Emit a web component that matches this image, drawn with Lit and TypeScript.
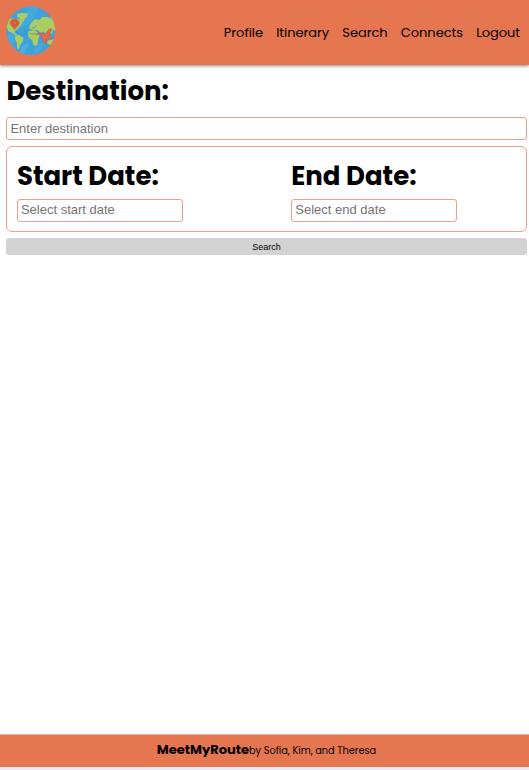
import { LitElement, html, css, svg } from "lit";
import { customElement } from "lit/decorators.js";

@customElement("globe-logo")
class GlobeLogo extends LitElement {
  static styles = css`
    :host { display: block; width: 50px; height: 50px; }
    svg { display: block; }
  `;
  render() {
    return html`<svg width="50" height="50" viewBox="0 0 150 150">
      ${svg`
      <defs><clipPath id="disc"><circle cx="74.500" cy="74" r="73"/></clipPath></defs>
      <circle cx="74.500" cy="74" r="73" fill="#3da2dc"/>
      <g clip-path="url(#disc)">
        <path d="M96 0Q92 45 38 70Q16 90 26 132L0 150V90Q60 60 68 0Z" fill="#4bacdf" opacity=".6"/>
        <path d="M80 134L116 100L124 108L92 146Z" fill="#55b2e0" opacity=".4"/>
        <path d="M38 150Q39 123 63 112L69 120Q54 131 55 150Z" fill="#55b2e0" opacity=".7"/>
        <g fill="#a9cc63">
          <path d="M2 62L5 43L15 37L34 38L43 42L49 52L43 60L38 65L32 72L25 77L29 84L36 88L31 90L20 82L7 76Z"/>
          <path d="M33 25L44 21L65 22L65 31L58 36L52 47L45 48L42 38L34 32Z"/>
          <path d="M28 89L40 87L53 97L50 107L44 114L38 130L33 127L33 112L27 99Z"/>
          <path d="M70 61L74 51L83 43L91 39L99 43L109 33L122 33L137 37L150 45V75L140 73L139 84L130 80L120 85L113 77L104 80L94 72L84 74L77 70L70 69Z"/>
          <path d="M66 77L80 72L94 77L101 88L97 100L94 117L87 121L81 113L78 102L67 93Z"/>
          <path d="M124 106L133 100L148 99L142 113L134 117L125 114Z"/>
        </g>
        <path d="M78 66L86 65L90 57" fill="none" stroke="#3da2dc" stroke-width="2.5"/>
      </g>
      <path d="M29 73C38 91 60 91 63 78C64 68 52 68 57 77M73 81C80 87 87 82 94 85" fill="none" stroke="#497a88" stroke-width="1.600"/>
      <path d="M26 71C20 61 12 56 12 52A14 13 0 0 1 40 52C40 58 31 62 26 71Z" fill="#e65e43" stroke="#b94435" stroke-width="1.2"/>
      <circle cx="26" cy="51" r="6.500" fill="#e8664a" stroke="#9d473a" stroke-width="1.800"/>
      <path d="M91 84L97 82L117 84L130 69Q136 65 137 70L130 87L139 96L137 101L127 97L122 99L120 112L115 113L110 99L105 95L108 91L104 88Z" fill="#ed6547" stroke="#af493a" stroke-width="1.2" stroke-linejoin="round"/>
      `}
    </svg>`;
  }
}

@customElement("app-root")
class AppRoot extends LitElement {
  static styles = css`
    :host {
      display: flex; flex-direction: column; box-sizing: border-box;
      width: 100%; height: 770px; background: #fff; color: #000;
      font-family: Poppins, Inter, sans-serif;
      border-bottom: 3px solid #e8ebf2;
    }
    * { box-sizing: border-box; }
    header {
      display: flex; justify-content: space-between; align-items: flex-start;
      height: 65px; flex: none; padding: 6px 9px 0 6px;
      background: #e67650; box-shadow: 0 1px 3px rgba(60, 30, 30, .55);
    }
    nav { display: flex; gap: 13.200px; padding-top: 17px; font-size: 13px; line-height: 20px; letter-spacing: -.04px; }
    nav a { white-space: nowrap; }
    main { flex: 1; padding: 7px 2.400px 0 6.400px; }
    h1 { margin: 0; font-size: 26px; font-weight: 700; line-height: 39px; white-space: nowrap; }
    input {
      display: block; height: 23px; padding: 0 3px; border: 1px solid #eda08b;
      border-radius: 3px; outline: none; background: #fff;
      font: 13px "Liberation Sans", Arial, sans-serif;
    }
    input::placeholder { color: #757575; opacity: 1; }
    .wide { width: 100%; margin-top: 6px; }
    .dates {
      display: grid; grid-template-columns: 274.400px 1fr; height: 86px; margin-top: 6px;
      padding: 10px 9.500px; border: 1px solid #eda08b; border-radius: 6px;
    }
    .dates input { width: 166px; margin-top: 3px; padding-bottom: 2px; }
    button {
      display: block; width: 100%; height: 17px; margin-top: 6px; padding: 0;
      border: 0; border-radius: 3px; background: #d3d3d3; color: #000;
      font: 9px "Liberation Sans", Arial, sans-serif;
    }
    footer {
      display: flex; align-items: baseline; justify-content: center; flex: none;
      height: 33px; padding: 5px 0 0 4px; background: #e67650;
      border-top: 1px solid #e3b5a5; line-height: 20px; white-space: nowrap;
    }
    .brand { font-size: 13px; font-weight: 700; }
    .authors { font-size: 9.750px; }
  `;
  render() {
    return html`
      <header>
        <globe-logo></globe-logo>
        <nav><a>Profile</a><a>Itinerary</a><a>Search</a><a>Connects</a><a>Logout</a></nav>
      </header>
      <main>
        <h1>Destination:</h1>
        <input class="wide" placeholder="Enter destination" />
        <section class="dates">
          <div><h1>Start Date:</h1><input placeholder="Select start date" /></div>
          <div><h1>End Date:</h1><input placeholder="Select end date" /></div>
        </section>
        <button>Search</button>
      </main>
      <footer><span class="brand">MeetMyRoute</span><span class="authors">by Sofia, Kim, and Theresa</span></footer>
    `;
  }
}
